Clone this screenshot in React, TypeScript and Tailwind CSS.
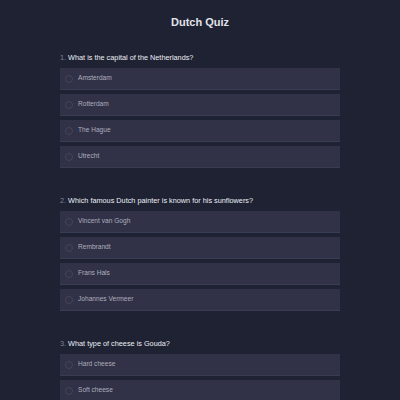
const QUESTIONS = [
  {
    text: "What is the capital of the Netherlands?",
    options: ["Amsterdam", "Rotterdam", "The Hague", "Utrecht"],
  },
  {
    text: "Which famous Dutch painter is known for his sunflowers?",
    options: ["Vincent van Gogh", "Rembrandt", "Frans Hals", "Johannes Vermeer"],
  },
  {
    text: "What type of cheese is Gouda?",
    options: ["Hard cheese", "Soft cheese", "Blue cheese", "Cream cheese"],
  },
];

function Option({ label }: { label: string }) {
  return (
    <div className="flex h-[22px] items-center border-b border-[#3a3c53] bg-[#313247] pl-[5px]">
      <span className="h-[8px] w-[8px] rounded-full border border-[#43455b]" />
      <span className="ml-[5px] text-[6.6px] leading-none text-[#adadbd]">{label}</span>
    </div>
  );
}

export default function App() {
  return (
    <div
      className="min-h-[400px] bg-[#1e2233] pt-[15px]"
      style={{ fontFamily: '"Liberation Sans", Arial, sans-serif' }}
    >
      <h1 className="text-center text-[11px] font-bold leading-[14px] text-[#e2e3ea]">Dutch Quiz</h1>
      <div className="mx-auto mt-[24px] flex w-[280px] flex-col gap-[28px]">
        {QUESTIONS.map((q, i) => (
          <div key={q.text}>
            <div className="mb-[5px] flex h-[10px] items-center text-[7.3px] leading-none">
              <span className="text-[#80838f]">{i + 1}.</span>
              <span className="ml-[2px] text-[#eceef3]">{q.text}</span>
            </div>
            <div className="flex flex-col gap-[4px]">
              {q.options.map((o) => (
                <Option key={o} label={o} />
              ))}
            </div>
          </div>
        ))}
      </div>
    </div>
  );
}
